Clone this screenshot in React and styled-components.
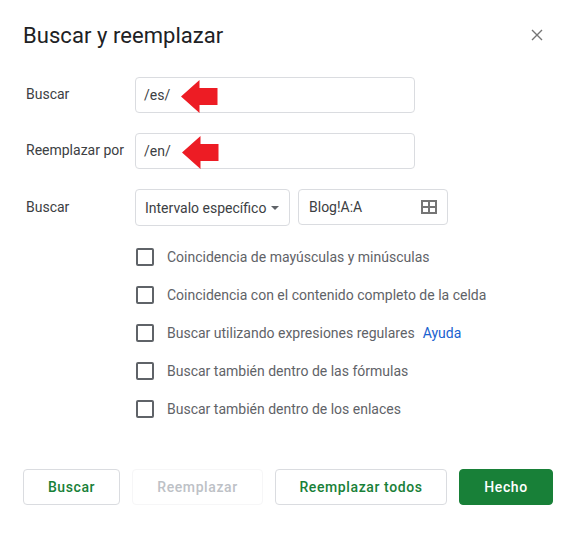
import React from "react";
import styled, { createGlobalStyle } from "styled-components";

const Global = createGlobalStyle`
  html, body { margin: 0; padding: 0; background: #fff; }
  body { font-family: Roboto, "Liberation Sans", sans-serif; }
`;

const Dialog = styled.div`
  width: 566px;
  height: 540px;
  box-sizing: border-box;
  padding: 23px 13px 0 23px;
  display: flex;
  flex-direction: column;
  background: #fff;
`;

const Header = styled.div`
  display: flex;
  justify-content: space-between;
  align-items: center;
  height: 26px;
`;

const Title = styled.h1`
  margin: 0;
  font: 400 22px/26px Roboto, sans-serif;
  letter-spacing: 0.05px;
  color: #202124;
`;

const Close = styled.button`
  width: 16px;
  height: 16px;
  padding: 0;
  margin: 0 8px 2px 0;
  border: 0;
  background: none;
  display: flex;
`;

const Form = styled.div`
  margin-top: 28px;
  display: flex;
  flex-direction: column;
  gap: 20px;
`;

const Row = styled.div`
  display: flex;
  align-items: flex-start;
  gap: 8px;
`;

const Label = styled.label`
  width: 101px;
  margin-left: 3px;
  font-size: 14px;
  line-height: 35px;
  color: #3c4043;
`;

const ThirdLabel = styled(Label)`
  line-height: 36px;
`;

const Field = styled.div`
  position: relative;
  box-sizing: border-box;
  width: ${(p) => p.$w}px;
  height: ${(p) => p.$h || 36}px;
  padding: 0 ${(p) => p.$pad || 8}px;
  display: flex;
  align-items: center;
  justify-content: ${(p) => (p.$start ? "flex-start" : "space-between")};
  gap: 5px;
  border: 1px solid #dadce0;
  border-radius: 4px;
  font-size: 14px;
  color: #3c4043;
  background: #fff;
`;

const Arrow = styled.svg`
  position: absolute;
  left: ${(p) => p.$x}px;
  top: 2px;
`;

const Caret = styled.span`
  width: 0;
  height: 0;
  border-left: 4px solid transparent;
  border-right: 4px solid transparent;
  border-top: 4px solid #5f6368;
`;

const Checks = styled.div`
  margin: 22px 0 0 112px;
  display: flex;
  flex-direction: column;
  gap: 20px;
`;

const CheckRow = styled.div`
  height: 18px;
  display: flex;
  align-items: center;
  gap: 13px;
  font-size: 14px;
  color: #5f6368;
`;

const Box = styled.span`
  box-sizing: border-box;
  width: 18px;
  height: 18px;
  margin-left: 1px;
  border: 2px solid #5f6368;
  border-radius: 2px;
`;

const Help = styled.a`
  color: #1a62d0;
  margin-left: 8px;
`;

const Footer = styled.div`
  margin-top: 51px;
  display: flex;
  gap: 12px;
`;

const Btn = styled.button`
  box-sizing: border-box;
  width: ${(p) => p.$w}px;
  height: 36px;
  border-radius: 4px;
  border: 1px solid ${(p) => (p.$primary ? "#188038" : p.$disabled ? "#f6f6f7" : "#dadce0")};
  background: ${(p) => (p.$primary ? "#188038" : "#fff")};
  color: ${(p) => (p.$primary ? "#fff" : p.$disabled ? "#bdc1c6" : "#188038")};
  font: 500 14px Roboto, sans-serif;
  letter-spacing: 0.6px;
  padding: 0;
`;

const RedArrow = ({ x }) => (
  <Arrow $x={x} width="37" height="33" viewBox="0 0 37 33">
    <path d="M0 16.5 L18.5 0 V8 H36.5 V25 H18.5 V33 Z" fill="#ed1c24" />
  </Arrow>
);

const checks = [
  "Coincidencia de mayúsculas y minúsculas",
  "Coincidencia con el contenido completo de la celda",
  "Buscar utilizando expresiones regulares",
  "Buscar también dentro de las fórmulas",
  "Buscar también dentro de los enlaces",
];

export default function App() {
  return (
    <Dialog>
      <Global />
      <Header>
        <Title>Buscar y reemplazar</Title>
        <Close aria-label="Cerrar">
          <svg width="16" height="16" viewBox="0 0 16 16">
            <path d="M3 3 L13 13 M13 3 L3 13" stroke="#757575" strokeWidth="1.4" fill="none" />
          </svg>
        </Close>
      </Header>
      <Form>
        <Row>
          <Label>Buscar</Label>
          <Field $w={280}>/es/<RedArrow x={45} /></Field>
        </Row>
        <Row>
          <Label>Reemplazar por</Label>
          <Field $w={280}>/en/<RedArrow x={45.5} /></Field>
        </Row>
        <Row>
          <ThirdLabel>Buscar</ThirdLabel>
          <Field $w={155} $h={37} $pad={9} $start>Intervalo específico<Caret /></Field>
          <Field $w={150} $pad={10}>
            Blog!A:A
            <svg width="16" height="14" viewBox="0 0 16 14">
              <path d="M1 1 H15 V13 H1 Z M8 1 V13 M1 7 H15" stroke="#757575" strokeWidth="2" fill="none" />
            </svg>
          </Field>
        </Row>
      </Form>
      <Checks>
        {checks.map((c, i) => (
          <CheckRow key={c}>
            <Box />
            <span>
              {c}
              {i === 2 && <Help>Ayuda</Help>}
            </span>
          </CheckRow>
        ))}
      </Checks>
      <Footer>
        <Btn $w={97}>Buscar</Btn>
        <Btn $w={131} $disabled>Reemplazar</Btn>
        <Btn $w={172}>Reemplazar todos</Btn>
        <Btn $w={94} $primary>Hecho</Btn>
      </Footer>
    </Dialog>
  );
}
